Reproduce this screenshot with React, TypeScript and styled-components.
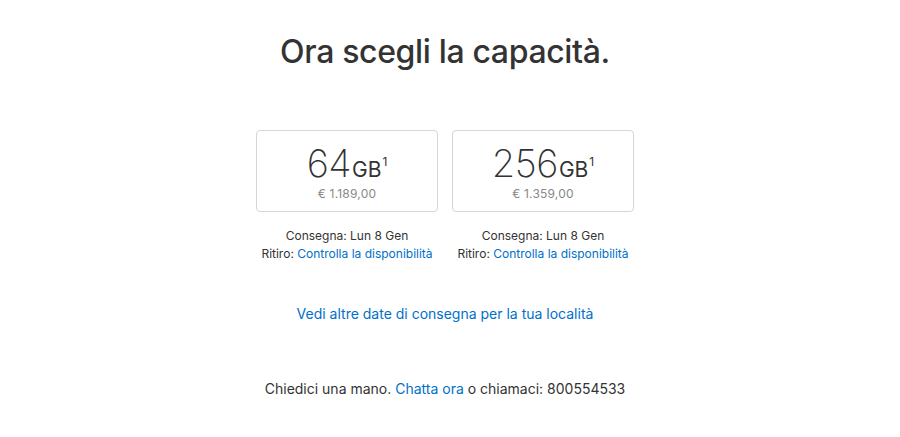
import * as React from "react";
import styled, { createGlobalStyle } from "styled-components";

const GlobalStyle = createGlobalStyle`
  body {
    margin: 0;
    background: #fff;
    font-family: Inter, "Noto Sans", "Liberation Sans", sans-serif;
    color: #333;
  }
`;

const Page = styled.div`
  width: 890px;
  display: flex;
  flex-direction: column;
  align-items: center;
  padding-top: 34px;
`;

const Title = styled.h1`
  margin: 0;
  font-size: 32px;
  line-height: 36px;
  font-weight: 500;
  letter-spacing: -0.35px;
  color: #333;
`;

const Options = styled.div`
  display: flex;
  gap: 14px;
  margin-top: 60px;
`;

const Option = styled.div`
  width: 182px;
  display: flex;
  flex-direction: column;
  align-items: center;
`;

const Card = styled.button`
  width: 182px;
  height: 82px;
  box-sizing: border-box;
  border: 1px solid #d6d6d6;
  border-radius: 4px;
  background: #fff;
  display: flex;
  flex-direction: column;
  align-items: center;
  padding: 12px 0 0;
  font-family: inherit;
  cursor: pointer;
`;

const Capacity = styled.div`
  display: flex;
  align-items: baseline;
  color: #333;
  line-height: 40px;
`;

const Size = styled.span`
  font-size: 38px;
  font-weight: 200;
  letter-spacing: -0.5px;
`;

const Unit = styled.span`
  font-size: 21px;
  font-weight: 400;
  margin-left: 1px;
`;

const Note = styled.sup`
  font-size: 12px;
  font-weight: 400;
  align-self: flex-start;
  margin-top: 13px;
  margin-left: 1px;
  line-height: 1;
`;

const Price = styled.div`
  font-size: 12px;
  color: #888;
  margin-top: -4px;
  letter-spacing: 0.2px;
`;

const Delivery = styled.div`
  margin-top: 15px;
  font-size: 12px;
  line-height: 18px;
  text-align: center;
  white-space: nowrap;
  color: #333;
`;

const Link = styled.a`
  color: #0070c9;
  text-decoration: none;
`;

const MoreDates = styled(Link)`
  margin-top: 41px;
  font-size: 14px;
  line-height: 20px;
`;

const Help = styled.div`
  margin-top: 55px;
  font-size: 14px;
  line-height: 20px;
  color: #333;
`;

interface OptionData {
  size: string;
  price: string;
}

const options: OptionData[] = [
  { size: "64", price: "€ 1.189,00" },
  { size: "256", price: "€ 1.359,00" }
];

export default function App() {
  return (
    <>
      <GlobalStyle />
      <Page>
        <Title>Ora scegli la capacità.</Title>
        <Options>
          {options.map(o => (
            <Option key={o.size}>
              <Card>
                <Capacity>
                  <Size>{o.size}</Size>
                  <Unit>GB</Unit>
                  <Note>1</Note>
                </Capacity>
                <Price>{o.price}</Price>
              </Card>
              <Delivery>
                Consegna: Lun 8 Gen
                <br />
                Ritiro: <Link href="#">Controlla la disponibilità</Link>
              </Delivery>
            </Option>
          ))}
        </Options>
        <MoreDates href="#">
          Vedi altre date di consegna per la tua località
        </MoreDates>
        <Help>
          Chiedici una mano. <Link href="#">Chatta ora</Link> o chiamaci:
          800554533
        </Help>
      </Page>
    </>
  );
}
